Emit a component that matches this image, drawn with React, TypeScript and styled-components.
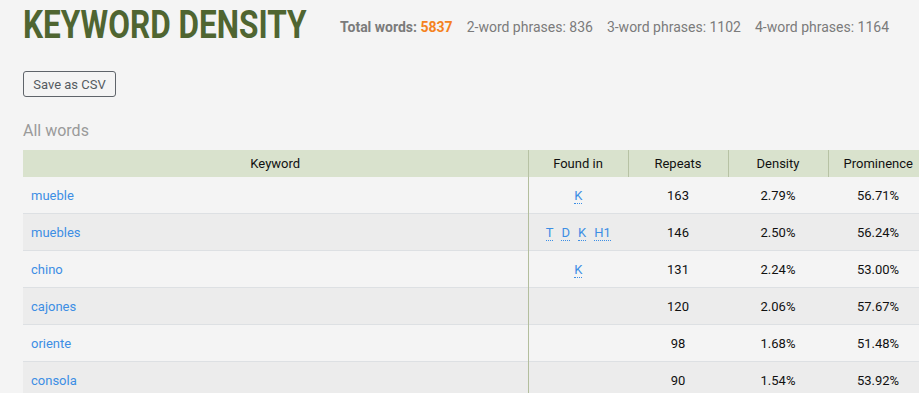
import styled, { createGlobalStyle } from 'styled-components';

const GlobalStyle = createGlobalStyle`
  body {
    margin: 0;
    background: #f4f4f4;
    font-family: Roboto, "Liberation Sans", sans-serif;
    overflow: hidden;
  }
`;

interface Row {
  word: string
  found: string[]
  repeats: number
  density: string
  prominence: string
}

const rows: Row[] = [
  { word: 'mueble', found: ['K'], repeats: 163, density: '2.79%', prominence: '56.71%' },
  { word: 'muebles', found: ['T', 'D', 'K', 'H1'], repeats: 146, density: '2.50%', prominence: '56.24%' },
  { word: 'chino', found: ['K'], repeats: 131, density: '2.24%', prominence: '53.00%' },
  { word: 'cajones', found: [], repeats: 120, density: '2.06%', prominence: '57.67%' },
  { word: 'oriente', found: [], repeats: 98, density: '1.68%', prominence: '51.48%' },
  { word: 'consola', found: [], repeats: 90, density: '1.54%', prominence: '53.92%' },
];

function App() {
  return (
    <Page>
      <GlobalStyle />
      <Header>
        <TitleBox>
          <Title>KEYWORD DENSITY</Title>
        </TitleBox>
        <Stats>
          <Stat><b>Total words:</b> <Total>5837</Total></Stat>
          <Stat>2-word phrases: 836</Stat>
          <Stat>3-word phrases: 1102</Stat>
          <Stat>4-word phrases: 1164</Stat>
        </Stats>
      </Header>
      <Button>Save as CSV</Button>
      <Section>All words</Section>
      <Table>
        <colgroup>
          <col style={{ width: 505 }} />
          <col style={{ width: 100 }} />
          <col style={{ width: 100 }} />
          <col style={{ width: 100 }} />
          <col style={{ width: 100 }} />
        </colgroup>
        <thead>
          <tr>
            <Th>Keyword</Th>
            <Th>Found in</Th>
            <Th>Repeats</Th>
            <Th>Density</Th>
            <Th>Prominence</Th>
          </tr>
        </thead>
        <tbody>
          {rows.map((r, i) => (
            <Tr key={r.word} $odd={i % 2 === 1}>
              <WordCell><Link>{r.word}</Link></WordCell>
              <FoundCell>
                {r.found.map(f => <Tag key={f}>{f}</Tag>)}
              </FoundCell>
              <Td>{r.repeats}</Td>
              <Td>{r.density}</Td>
              <Td>{r.prominence}</Td>
            </Tr>
          ))}
        </tbody>
      </Table>
    </Page>
  );
}

export default App;

const Page = styled.div`
  padding: 0 0 0 23px;
`;

const Header = styled.div`
  display: flex;
  align-items: flex-start;
  height: 71px;
`;

const TitleBox = styled.div`
  width: 317px;
  flex: none;
  padding-top: 6px;
`;

// condensed look: Roboto bold squeezed horizontally
const Title = styled.h1`
  margin: 0;
  font-family: Roboto, sans-serif;
  font-weight: 700;
  font-size: 38px;
  line-height: 38px;
  color: #4f6531;
  white-space: nowrap;
  transform: scaleX(0.83);
  transform-origin: left center;
`;

const Stats = styled.div`
  display: flex;
  gap: 14px;
  padding-top: 19px;
  font-size: 14px;
  color: #7b7b7b;
  white-space: nowrap;
`;

const Stat = styled.span`
  b {
    font-weight: 700;
  }
`;

const Total = styled.b`
  color: #f58220;
`;

const Button = styled.button`
  display: block;
  width: 93px;
  height: 26px;
  padding: 0;
  background: transparent;
  border: 1px solid #5f646a;
  border-radius: 3px;
  font-family: Roboto, sans-serif;
  font-size: 13px;
  color: #555b61;
`;

const Section = styled.div`
  margin-top: 24px;
  height: 29px;
  font-size: 16px;
  color: #9a9a9a;
`;

const Table = styled.table`
  border-collapse: collapse;
  table-layout: fixed;
  width: 905px;
  font-size: 13px;
`;

const Th = styled.th`
  height: 27px;
  padding: 0;
  background: #d9e2cd;
  font-weight: 400;
  color: #111;
  text-align: center;
  border-left: 1px solid #b7c2a4;
  &:first-child {
    border-left: none;
  }
`;

const Tr = styled.tr<{ $odd: boolean }>`
  background: ${p => (p.$odd ? '#ececec' : '#f4f4f4')};
  border-bottom: 1px solid #dde0e3;
`;

const Td = styled.td`
  height: 36px;
  padding: 0;
  text-align: center;
  color: #111;
`;

const WordCell = styled(Td)`
  text-align: left;
  padding-left: 8px;
`;

const FoundCell = styled(Td)`
  border-left: 1px solid #b3be9d;
`;

const Link = styled.a`
  color: #3d8ee4;
  cursor: pointer;
`;

const Tag = styled.span`
  color: #3d8ee4;
  border-bottom: 1px dotted #3d8ee4;
  margin: 0 4px;
`;
